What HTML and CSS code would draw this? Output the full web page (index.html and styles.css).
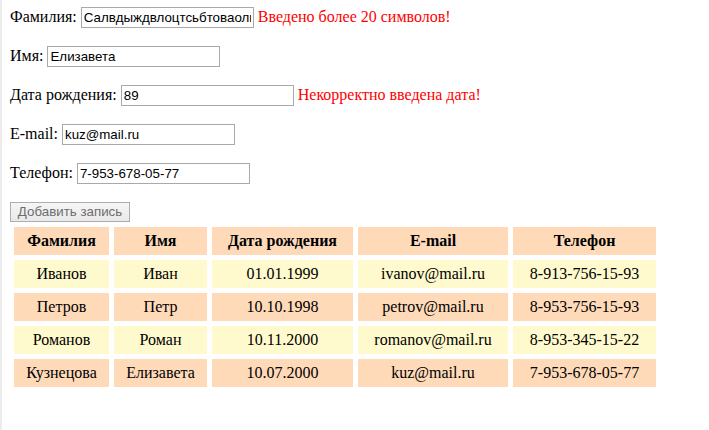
FILE: index.html
```html
<!DOCTYPE html>
<html lang="ru">
<head>
<meta charset="utf-8">
<title>Записи</title>
<link rel="stylesheet" href="styles.css">
</head>
<body>
<form class="form">
  <div class="row">
    <label class="label" for="f1">Фамилия:</label>
    <input class="field" id="f1" type="text" value="Салвдыждвлоцтсьбтоваолвы">
    <span class="error">Введено более 20 символов!</span>
  </div>
  <div class="row">
    <label class="label" for="f2">Имя:</label>
    <input class="field" id="f2" type="text" value="Елизавета">
  </div>
  <div class="row">
    <label class="label" for="f3">Дата рождения:</label>
    <input class="field" id="f3" type="text" value="89">
    <span class="error">Некорректно введена дата!</span>
  </div>
  <div class="row">
    <label class="label" for="f4">E-mail:</label>
    <input class="field" id="f4" type="text" value="kuz@mail.ru">
  </div>
  <div class="row">
    <label class="label" for="f5">Телефон:</label>
    <input class="field" id="f5" type="text" value="7-953-678-05-77">
  </div>
  <div class="row row-btn">
    <button class="btn" type="button" disabled>Добавить запись</button>
  </div>
</form>
<table class="grid">
  <thead>
    <tr class="peach">
      <th class="c1">Фамилия</th>
      <th class="c2">Имя</th>
      <th class="c3">Дата рождения</th>
      <th class="c4">E-mail</th>
      <th class="c5">Телефон</th>
    </tr>
  </thead>
  <tbody>
    <tr class="lemon">
      <td>Иванов</td><td>Иван</td><td>01.01.1999</td><td>ivanov@mail.ru</td><td>8-913-756-15-93</td>
    </tr>
    <tr class="peach">
      <td>Петров</td><td>Петр</td><td>10.10.1998</td><td>petrov@mail.ru</td><td>8-953-756-15-93</td>
    </tr>
    <tr class="lemon">
      <td>Романов</td><td>Роман</td><td>10.11.2000</td><td>romanov@mail.ru</td><td>8-953-345-15-22</td>
    </tr>
    <tr class="peach">
      <td>Кузнецова</td><td>Елизавета</td><td>10.07.2000</td><td>kuz@mail.ru</td><td>7-953-678-05-77</td>
    </tr>
  </tbody>
</table>
</body>
</html>
```

FILE: styles.css
```css
html, body {
  margin: 0;
  padding: 0;
}
body {
  background: #ffffff;
  color: #000000;
  font-family: "Liberation Serif", "Times New Roman", serif;
  font-size: 16px;
  border-left: 2px solid #ececec;
  min-height: 100vh;
  box-sizing: border-box;
  padding: 7px 8px 0 8px;
}
.form {
  margin: 0;
}
.row {
  display: flex;
  align-items: baseline;
  column-gap: 4px;
  height: 21px;
  margin-bottom: 18px;
}
.row-btn {
  align-items: flex-start;
}
.label {
  white-space: nowrap;
}
.field {
  box-sizing: border-box;
  width: 173px;
  height: 21px;
  margin: 0;
  padding: 1px 2px;
  border: 1px solid #a9a9a9;
  font-family: "Liberation Sans", Arial, sans-serif;
  font-size: 13.33px;
  color: #000000;
  background: #ffffff;
}
.error {
  color: #ff0000;
  white-space: nowrap;
}
.btn {
  box-sizing: border-box;
  width: 120px;
  height: 20px;
  margin: 0;
  padding: 0 6px;
  border: 1px solid #adadad;
  background: linear-gradient(#f6f6f6, #e9e9e9);
  color: #6d6d6d;
  font-family: "Liberation Sans", Arial, sans-serif;
  font-size: 13.33px;
  line-height: 16px;
}
.grid {
  table-layout: fixed;
  width: 652px;
  border-collapse: separate;
  border-spacing: 5px;
  margin: -19px 0 0 -1px;
}
.grid th,
.grid td {
  padding: 0;
  height: 28px;
  text-align: center;
  vertical-align: middle;
  white-space: nowrap;
}
.grid th {
  font-weight: bold;
}
.c1 { width: 95px; }
.c2 { width: 93px; }
.c3 { width: 141px; }
.c4 { width: 150px; }
.c5 { width: 143px; }
.peach th, .peach td {
  background: #ffdab9;
}
.lemon td {
  background: #fffacd;
}
```
